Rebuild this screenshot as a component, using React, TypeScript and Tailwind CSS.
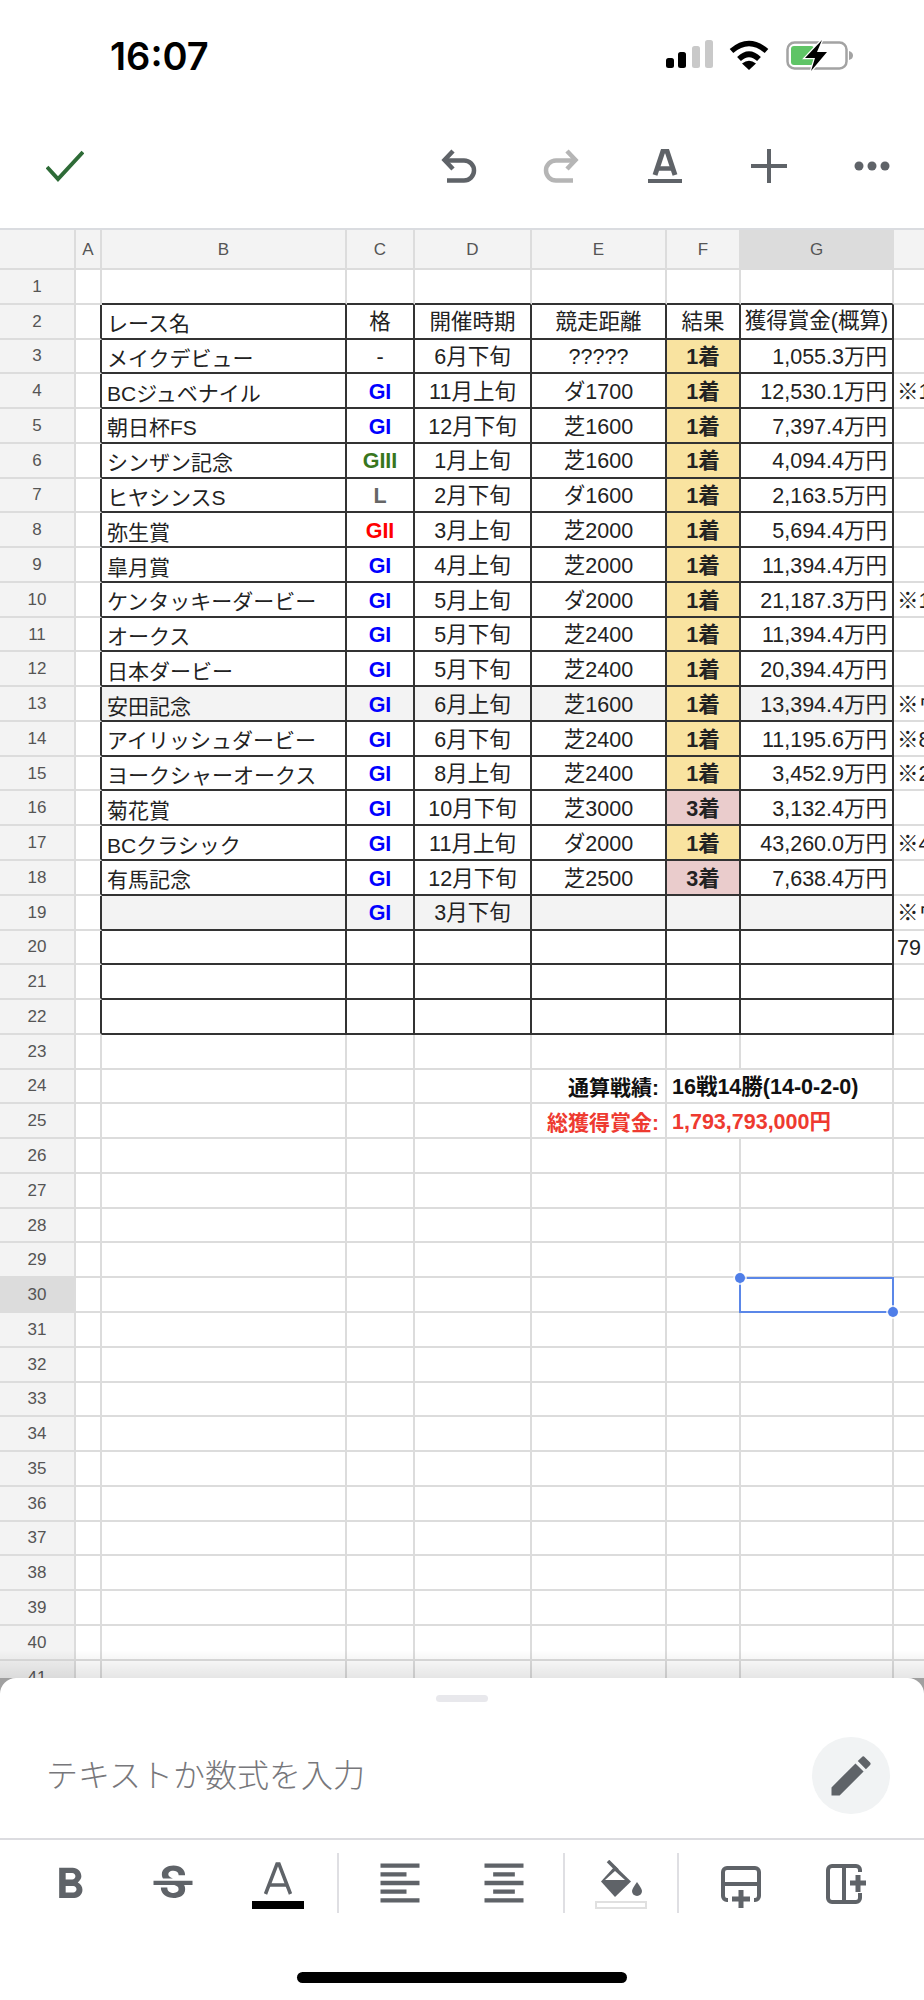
import { MdEdit, MdFormatAlignCenter, MdFormatAlignLeft, MdFormatBold, MdStrikethroughS } from 'react-icons/md';

interface Race {
  name: string;
  grade: string;
  period: string;
  distance: string;
  result: string;
  prize: string;
  note?: string;
  shaded?: boolean;
}

const races: Race[] = [
  { name: 'レース名', grade: '格', period: '開催時期', distance: '競走距離', result: '結果', prize: '獲得賞金(概算)' },
  { name: 'メイクデビュー', grade: '-', period: '6月下旬', distance: '?????', result: '1着', prize: '1,055.3万円' },
  { name: 'BCジュベナイル', grade: 'GI', period: '11月上旬', distance: 'ダ1700', result: '1着', prize: '12,530.1万円', note: '※1' },
  { name: '朝日杯FS', grade: 'GI', period: '12月下旬', distance: '芝1600', result: '1着', prize: '7,397.4万円' },
  { name: 'シンザン記念', grade: 'GIII', period: '1月上旬', distance: '芝1600', result: '1着', prize: '4,094.4万円' },
  { name: 'ヒヤシンスS', grade: 'L', period: '2月下旬', distance: 'ダ1600', result: '1着', prize: '2,163.5万円' },
  { name: '弥生賞', grade: 'GII', period: '3月上旬', distance: '芝2000', result: '1着', prize: '5,694.4万円' },
  { name: '皐月賞', grade: 'GI', period: '4月上旬', distance: '芝2000', result: '1着', prize: '11,394.4万円' },
  { name: 'ケンタッキーダービー', grade: 'GI', period: '5月上旬', distance: 'ダ2000', result: '1着', prize: '21,187.3万円', note: '※1' },
  { name: 'オークス', grade: 'GI', period: '5月下旬', distance: '芝2400', result: '1着', prize: '11,394.4万円' },
  { name: '日本ダービー', grade: 'GI', period: '5月下旬', distance: '芝2400', result: '1着', prize: '20,394.4万円' },
  { name: '安田記念', grade: 'GI', period: '6月上旬', distance: '芝1600', result: '1着', prize: '13,394.4万円', note: '※ウ', shaded: true },
  { name: 'アイリッシュダービー', grade: 'GI', period: '6月下旬', distance: '芝2400', result: '1着', prize: '11,195.6万円', note: '※8' },
  { name: 'ヨークシャーオークス', grade: 'GI', period: '8月上旬', distance: '芝2400', result: '1着', prize: '3,452.9万円', note: '※2' },
  { name: '菊花賞', grade: 'GI', period: '10月下旬', distance: '芝3000', result: '3着', prize: '3,132.4万円' },
  { name: 'BCクラシック', grade: 'GI', period: '11月上旬', distance: 'ダ2000', result: '1着', prize: '43,260.0万円', note: '※4' },
  { name: '有馬記念', grade: 'GI', period: '12月下旬', distance: '芝2500', result: '3着', prize: '7,638.4万円' },
  { name: '', grade: 'GI', period: '3月下旬', distance: '', result: '', prize: '', note: '※ウ', shaded: true },
  { name: '', grade: '', period: '', distance: '', result: '', prize: '', note: '79' },
  { name: '', grade: '', period: '', distance: '', result: '', prize: '' },
  { name: '', grade: '', period: '', distance: '', result: '', prize: '' },
];

const rowClass = 'grid grid-cols-[76px_26px_245px_68px_117px_135px_74px_153px_1fr] h-[34.77px]';
const lightCell = 'border-r-2 border-b-2 border-[#dcdcdc]';
const darkCell = 'border-r-2 border-b-2 border-[#333333]';
const topBoxCell = 'border-r-2 border-b-2 border-r-[#dcdcdc] border-b-[#333333]';
const textCell = 'flex items-center justify-center pt-[4px] whitespace-nowrap overflow-visible';

const gradeColor = (grade: string) => {
  if (grade === 'GI') return 'text-[#0000ff] font-bold';
  if (grade === 'GII') return 'text-[#ff0000] font-bold';
  if (grade === 'GIII') return 'text-[#38761d] font-bold';
  if (grade === 'L') return 'text-[#666666] font-bold';
  return 'text-[#222222]';
};

const RowHead = ({ n }: { n: number }) => (
  <div className={`${lightCell} ${n === 30 ? 'bg-[#dcdcdc]' : 'bg-[#f3f3f3]'} flex items-center justify-center text-[17px] text-[#555555]`}>
    {n}
  </div>
);

const RaceRow = ({ n, race }: { n: number; race: Race }) => {
  const head = n === 2;
  const bg = race.shaded ? 'bg-[#f3f3f3]' : '';
  const resultBg = race.result === '1着' ? 'bg-[#f9e3a0]' : race.result === '3着' ? 'bg-[#eacccc]' : bg;
  return (
    <div className={rowClass}>
      <RowHead n={n} />
      <div className="border-r-2 border-b-2 border-r-[#333333] border-b-[#dcdcdc]" />
      <div className={`${darkCell} ${bg} flex items-center pt-[5px] pl-[5px] text-[21px] whitespace-nowrap`}>{race.name}</div>
      <div className={`${darkCell} ${bg} ${textCell} ${head ? '' : gradeColor(race.grade)}`}>{race.grade}</div>
      <div className={`${darkCell} ${bg} ${textCell}`}>{race.period}</div>
      <div className={`${darkCell} ${bg} ${textCell}`}>{race.distance}</div>
      <div className={`${darkCell} ${resultBg} ${textCell} ${head ? '' : 'font-bold'}`}>{race.result}</div>
      <div className={`${darkCell} ${bg} ${head ? 'flex items-center justify-center pt-[2px] whitespace-nowrap' : 'flex items-center justify-end pt-[4px] pr-[5px] whitespace-nowrap'}`}>
        {race.prize}
      </div>
      <div className="border-b-2 border-[#dcdcdc] flex items-center pt-[4px] pl-[3px] overflow-hidden whitespace-nowrap">{race.note}</div>
    </div>
  );
};

const EmptyRow = ({ n, topBox }: { n: number; topBox?: boolean }) => {
  const cell = topBox ? topBoxCell : lightCell;
  return (
    <div className={rowClass}>
      <RowHead n={n} />
      <div className={lightCell} />
      <div className={cell} />
      <div className={cell} />
      <div className={cell} />
      <div className={cell} />
      <div className={cell} />
      <div className={`relative ${cell}`}>
        {n === 30 && (
          <div className="absolute z-10 -left-[2px] -top-[1px] -right-[2px] -bottom-[2px] border-2 border-[#5b87e8]">
            <span className="absolute -left-[6px] -top-[6px] w-[10px] h-[10px] rounded-full bg-[#4f7ee8] ring-2 ring-white/70" />
            <span className="absolute -right-[6px] -bottom-[6px] w-[10px] h-[10px] rounded-full bg-[#4f7ee8] ring-2 ring-white/70" />
          </div>
        )}
      </div>
      <div className="border-b-2 border-[#dcdcdc]" />
    </div>
  );
};

const SummaryRow = ({ n, label, value, color }: { n: number; label: string; value: string; color: string }) => (
  <div className={rowClass}>
    <RowHead n={n} />
    <div className={lightCell} />
    <div className={lightCell} />
    <div className={lightCell} />
    <div className={lightCell} />
    <div className={`${lightCell} ${color} font-bold flex items-center justify-end pt-[4px] pr-[6px] text-[21px] whitespace-nowrap`}>{label}</div>
    <div className={`border-b-2 border-[#dcdcdc] ${color} font-bold flex items-center pt-[4px] pl-[5px] whitespace-nowrap`}>{value}</div>
    <div className={lightCell} />
    <div className="border-b-2 border-[#dcdcdc]" />
  </div>
);

const StatusIcons = () => (
  <div className="flex items-start ml-auto mr-[70px] mt-[3px]">
    <svg width="47" height="29" viewBox="0 0 47 29">
      <rect x="0" y="18" width="8" height="10" rx="2.5" fill="#000" />
      <rect x="12" y="12" width="8" height="16" rx="2.5" fill="#000" />
      <rect x="26" y="6" width="8" height="22" rx="2.5" fill="#c9c9c9" />
      <rect x="39" y="0" width="8" height="28" rx="2.5" fill="#c9c9c9" />
    </svg>
    <svg className="ml-[16px]" width="40" height="30" viewBox="0 0 40 30" fill="none" stroke="#000">
      <path d="M2.5 11 Q20 -4 37.5 11" strokeWidth="5.5" />
      <path d="M10 19 Q20 9.5 30 19" strokeWidth="5.5" />
      <path d="M13 23.5 Q20 18 27 23.5 L20 30 Z" fill="#000" stroke="none" />
    </svg>
    <svg className="ml-[17px]" width="68" height="31" viewBox="0 0 68 31" fill="none">
      <rect x="1.5" y="2.5" width="59" height="26" rx="7" stroke="#a3a3a3" strokeWidth="2.5" />
      <rect x="5" y="6" width="23" height="19" rx="3" fill="#5fc466" />
      <path d="M63 11 Q67 12 67 15.5 Q67 19 63 20 Z" fill="#a3a3a3" />
      <path d="M36 0 L19 18 L29 18 L25 31 L41 12 L31 12 Z" fill="#000" stroke="#fff" strokeWidth="2.5" style={{ paintOrder: 'stroke' }} />
    </svg>
  </div>
);

const UndoIcon = ({ color, className }: { color: string; className?: string }) => (
  <svg className={className} width="36" height="34" viewBox="0 0 36 34" fill="none" stroke={color} strokeWidth="4.5">
    <path d="M12 2 L3.5 11 L12 20" />
    <path d="M4 11.5 H23 A 10 10 0 0 1 23 31.5 H6" />
  </svg>
);

const TopToolbar = () => (
  <div className="flex items-start h-[128px] pt-[49px] pl-[46px]">
    <svg width="38" height="34" viewBox="0 0 38 34" fill="none" stroke="#2e6b37" strokeWidth="4">
      <path d="M1 18 L12 30 L37 3" />
    </svg>
    <UndoIcon color="#5f6368" className="ml-[357px]" />
    <UndoIcon color="#b5b5b5" className="ml-[66px] -scale-x-100" />
    <svg className="ml-[69px]" width="34" height="34" viewBox="0 0 34 34" fill="none" stroke="#5f6368">
      <path d="M7 26 L15 2 H19 L27 26" strokeWidth="5" />
      <path d="M9 19.5 H25" strokeWidth="4.5" />
      <path d="M0 32 H34" strokeWidth="4" />
    </svg>
    <svg className="ml-[69px]" width="36" height="34" viewBox="0 0 36 34" stroke="#5f6368" strokeWidth="4">
      <path d="M0 17 H36 M18 0 V34" />
    </svg>
    <svg className="ml-[67px]" width="36" height="34" viewBox="0 0 36 34" fill="#5f6368">
      <circle cx="5" cy="17" r="4.5" />
      <circle cx="18" cy="17" r="4.5" />
      <circle cx="31" cy="17" r="4.5" />
    </svg>
  </div>
);

const Separator = ({ className }: { className: string }) => <div className={`w-[2px] h-[60px] mt-[13px] bg-[#dfdfe3] ${className}`} />;

const BottomToolbar = () => (
  <div className="flex items-start h-[80px] text-[#5f6368]">
    <MdFormatBold size={52} className="ml-[44px] mt-[19px]" />
    <MdStrikethroughS size={52} className="ml-[51px] mt-[19px]" />
    <svg className="ml-[53px] mt-[22px]" width="52" height="48" viewBox="0 0 52 48" fill="none">
      <path d="M13.5 32 L25 2 H27 L38.5 32" stroke="#5f6368" strokeWidth="3.5" />
      <path d="M17 23 H35" stroke="#5f6368" strokeWidth="3.5" />
      <rect x="0" y="39" width="52" height="8" fill="#000" />
    </svg>
    <Separator className="ml-[33px]" />
    <MdFormatAlignLeft size={52} className="ml-[35px] mt-[17px]" />
    <MdFormatAlignCenter size={52} className="ml-[52px] mt-[17px]" />
    <Separator className="ml-[33px]" />
    <svg className="ml-[30px] mt-[20px]" width="52" height="50" viewBox="0 0 52 50" fill="none">
      <path d="M13 1 L22.5 10.5" stroke="#5f6368" strokeWidth="3.5" />
      <path d="M20 6 L36 21.5 L20 37 L6 21.5 Z" fill="#5f6368" />
      <path d="M20 11 L30 20 H10 Z" fill="#fff" />
      <path d="M42 22 Q47 29 47 31 A 5 5 0 0 1 37 31 Q37 29 42 22 Z" fill="#5f6368" />
      <rect x="1" y="42" width="50" height="6" fill="#fff" stroke="#e0e0e0" strokeWidth="2" />
    </svg>
    <Separator className="ml-[30px]" />
    <svg className="ml-[42px] mt-[26px]" width="40" height="42" viewBox="0 0 40 42" fill="none" stroke="#5f6368" strokeWidth="4">
      <path d="M7 34 H6 A 4 4 0 0 1 2 30 V6 A 4 4 0 0 1 6 2 H34 A 4 4 0 0 1 38 6 V30 A 4 4 0 0 1 34 34 H33" />
      <path d="M2 18 H38" />
      <path d="M11 33 H29 M20 24 V42" strokeWidth="5" />
    </svg>
    <svg className="ml-[65px] mt-[24px]" width="40" height="40" viewBox="0 0 40 40" fill="none" stroke="#5f6368" strokeWidth="4">
      <path d="M34 8 V6 A 4 4 0 0 0 30 2 H6 A 4 4 0 0 0 2 6 V34 A 4 4 0 0 0 6 38 H30 A 4 4 0 0 0 34 34 V29" />
      <path d="M18 2 V38" />
      <path d="M24 19 H40 M32 11 V28" strokeWidth="5" />
    </svg>
  </div>
);

export default function App() {
  const rows = Array.from({ length: 41 }, (_, i) => i + 1);
  return (
    <div
      className="w-[924px] h-[2000px] overflow-hidden bg-white flex flex-col text-[21.5px] leading-none text-[#222222]"
      style={{ fontFamily: '"Liberation Sans", "Noto Sans CJK JP", sans-serif' }}
    >
      <div className="flex items-start h-[100px] pt-[37px] pl-[110px] shrink-0">
        <span className="text-[38px] font-semibold text-black" style={{ fontFamily: 'Inter, sans-serif' }}>
          16:07
        </span>
        <StatusIcons />
      </div>
      <TopToolbar />

      <div className="relative h-[1450px] shrink-0 overflow-hidden border-t-2 border-[#dadce0]">
        <div className="grid grid-cols-[76px_26px_245px_68px_117px_135px_74px_153px_1fr] h-[40px] bg-[#f3f3f3] text-[17px] text-[#555555]">
          <div className={lightCell} />
          {['A', 'B', 'C', 'D', 'E', 'F'].map((col) => (
            <div key={col} className={`${lightCell} flex items-center justify-center`}>
              {col}
            </div>
          ))}
          <div className={`${lightCell} bg-[#dcdcdc] flex items-center justify-center`}>G</div>
          <div className="border-b-2 border-[#dcdcdc]" />
        </div>
        {rows.map((n) => {
          if (n >= 2 && n <= 22) return <RaceRow key={n} n={n} race={races[n - 2]} />;
          if (n === 24) return <SummaryRow key={n} n={n} label="通算戦績:" value="16戦14勝(14-0-2-0)" color="text-[#111111]" />;
          if (n === 25) return <SummaryRow key={n} n={n} label="総獲得賞金:" value="1,793,793,000円" color="text-[#ee3a30]" />;
          return <EmptyRow key={n} n={n} topBox={n === 1} />;
        })}
        <div className="absolute left-0 right-0 bottom-0 h-[28px] bg-linear-to-b from-transparent to-black/10" />
      </div>

      <div className="flex-1 bg-[#a0a0a0]">
        <div className="h-full bg-white rounded-t-[16px] flex flex-col">
          <div className="w-[52px] h-[7px] rounded-full bg-[#e8e8ec] mx-auto mt-[17px] shrink-0" />
          <div className="flex items-center justify-between mt-[35px] pl-[46px] pr-[34px] shrink-0">
            <span className="text-[32px] font-light text-[#77777b]">テキストか数式を入力</span>
            <div className="w-[78px] h-[77px] rounded-full bg-[#f1f3f4] flex items-center justify-center text-[#5f6368]">
              <MdEdit size={52} />
            </div>
          </div>
          <div className="h-[2px] bg-[#dcdce0] mt-[24px] shrink-0" />
          <BottomToolbar />
          <div className="w-[330px] h-[11px] rounded-full bg-black mx-auto mt-[52px] shrink-0" />
        </div>
      </div>
    </div>
  );
}
